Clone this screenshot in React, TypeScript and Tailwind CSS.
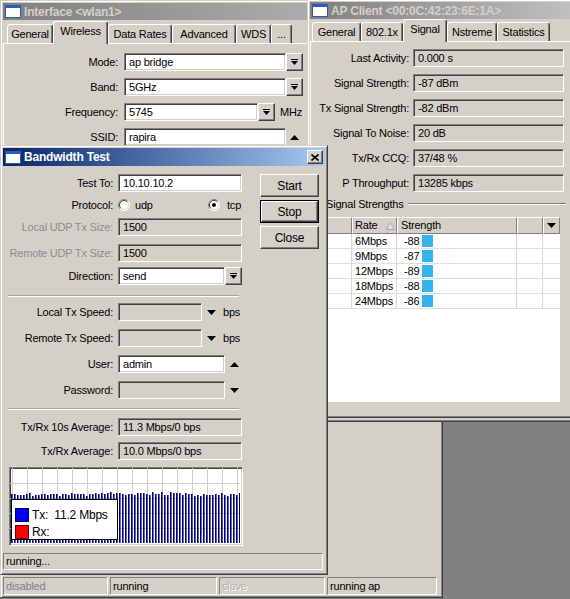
import React from "react";

const FONT = "font-['Liberation_Sans',Arial,sans-serif]";
const RAISED =
  "border border-t-white border-l-white border-r-[#404040] border-b-[#404040] shadow-[inset_-1px_-1px_0_#808080]";
const SUNKEN =
  "border border-t-[#808080] border-l-[#808080] border-r-white border-b-white shadow-[inset_1px_1px_0_#404040,inset_-1px_-1px_0_#d4d0c8]";
const THIN =
  "border border-t-[#808080] border-l-[#808080] border-r-white border-b-white";
const WINDOW =
  "border border-t-[#d4d0c8] border-l-[#d4d0c8] border-r-[#404040] border-b-[#404040] shadow-[inset_1px_1px_0_#ffffff,inset_-1px_-1px_0_#808080]";

function WinIcon() {
  return (
    <svg width="16" height="13" viewBox="0 0 16 13" className="shrink-0">
      <rect x="0.5" y="0.5" width="15" height="12" fill="#ffffff" stroke="#2a5bc0" />
      <rect x="0" y="0" width="16" height="3" fill="#2a5bc0" />
    </svg>
  );
}

function CloseX() {
  return (
    <div className={`${RAISED} bg-[#d4d0c8] w-[16px] h-[14px] flex items-center justify-center shrink-0`}>
      <svg width="8" height="7" viewBox="0 0 8 7">
        <path d="M0.5 0.5 L7.5 6.5 M7.5 0.5 L0.5 6.5" stroke="#000" strokeWidth="1.6" />
      </svg>
    </div>
  );
}

function TitleBar({
  title,
  active,
  close,
  h,
}: {
  title: string;
  active?: boolean;
  close?: boolean;
  h: string;
}) {
  return (
    <div
      className={`${h} shrink-0 flex items-center pl-[2px] pr-[2px] ${
        active
          ? "bg-linear-to-r from-[#0a246a] to-[#a6caf0]"
          : "bg-linear-to-r from-[#808080] to-[#c0c0c0]"
      }`}
    >
      <WinIcon />
      <span
        className={`ml-[3px] font-bold text-[12px] whitespace-nowrap ${
          active ? "text-white" : "text-[#d4d0c8]"
        }`}
      >
        {title}
      </span>
      {close && <div className="ml-auto"><CloseX /></div>}
    </div>
  );
}

function ComboIcon() {
  return (
    <svg width="7" height="7" viewBox="0 0 7 7">
      <rect x="0" y="0" width="7" height="1" fill="#000" />
      <polygon points="0,2 7,2 3.5,6" fill="#000" />
    </svg>
  );
}

function DropBtn({ className = "" }: { className?: string }) {
  return (
    <div className={`${RAISED} bg-[#d4d0c8] w-[17px] h-[18px] flex items-center justify-center shrink-0 ${className}`}>
      <ComboIcon />
    </div>
  );
}

function TriUp() {
  return (
    <svg width="9" height="5" viewBox="0 0 9 5">
      <polygon points="0,5 4.5,0 9,5" fill="#000" />
    </svg>
  );
}
function TriDown() {
  return (
    <svg width="9" height="5" viewBox="0 0 9 5">
      <polygon points="0,0 9,0 4.5,5" fill="#000" />
    </svg>
  );
}

function Field({
  className = "",
  white = true,
  children,
}: {
  className?: string;
  white?: boolean;
  children?: React.ReactNode;
}) {
  return (
    <div
      className={`${SUNKEN} ${white ? "bg-white" : "bg-[#d4d0c8]"} h-[18px] flex items-center pl-[4px] text-black overflow-hidden whitespace-nowrap shrink-0 ${className}`}
    >
      {children}
    </div>
  );
}

function Tab({
  children,
  className,
  active,
}: {
  children: React.ReactNode;
  className: string;
  active?: boolean;
}) {
  return (
    <div
      className={`${className} ${
        active ? "h-[23px] -mb-px relative z-10 bg-[#d4d0c8] pb-[4px]" : "h-[19px]"
      } border-t border-l border-r border-t-white border-l-white border-r-[#404040] shadow-[inset_-1px_0_0_#808080] rounded-t-[3px] flex items-center justify-center whitespace-nowrap shrink-0`}
    >
      {children}
    </div>
  );
}

function Radio({ checked }: { checked?: boolean }) {
  return (
    <svg width="12" height="12" viewBox="0 0 12 12" className="shrink-0">
      <circle cx="6" cy="6" r="5.5" fill="#ffffff" />
      <path d="M2.1 9.9 A5.5 5.5 0 0 1 9.9 2.1" stroke="#808080" fill="none" />
      <path d="M9.9 2.1 A5.5 5.5 0 0 1 2.1 9.9" stroke="#ffffff" fill="none" />
      <path d="M2.8 9.2 A4.5 4.5 0 0 1 9.2 2.8" stroke="#404040" fill="none" />
      <path d="M9.2 2.8 A4.5 4.5 0 0 1 2.8 9.2" stroke="#d4d0c8" fill="none" />
      {checked && <circle cx="6" cy="6" r="2" fill="#000" />}
    </svg>
  );
}

function InterfaceWindow() {
  return (
    <div className={`absolute left-0 top-0 w-[443px] h-[598px] bg-[#d4d0c8] p-[2px] flex flex-col ${WINDOW}`}>
      <TitleBar title="Interface <wlan1>" h="h-[17px]" />
      <div className="flex items-end h-[23px] pl-[4px] shrink-0">
        <Tab className="w-[46px]">General</Tab>
        <Tab className="w-[55px]" active>Wireless</Tab>
        <Tab className="w-[64px]">Data Rates</Tab>
        <Tab className="w-[64px]">Advanced</Tab>
        <Tab className="w-[35px]">WDS</Tab>
        <Tab className="w-[21px]">...</Tab>
      </div>
      <div className="flex-1 border-t border-l border-t-white border-l-white flex flex-col gap-[7px] pt-[9px]">
        <div className="flex items-center">
          <div className="w-[114px] text-right">Mode:</div>
          <Field className="ml-[6px] w-[162px]">ap bridge</Field>
          <DropBtn />
        </div>
        <div className="flex items-center">
          <div className="w-[114px] text-right">Band:</div>
          <Field className="ml-[6px] w-[162px]">5GHz</Field>
          <DropBtn />
        </div>
        <div className="flex items-center">
          <div className="w-[114px] text-right">Frequency:</div>
          <Field className="ml-[6px] w-[134px]">5745</Field>
          <DropBtn />
          <span className="ml-[5px]">MHz</span>
        </div>
        <div className="flex items-center">
          <div className="w-[114px] text-right">SSID:</div>
          <Field className="ml-[6px] w-[162px]">rapira</Field>
          <span className="ml-[4px]"><TriUp /></span>
        </div>
      </div>
      <div className="flex gap-[2px] h-[18px] mt-[1px] shrink-0">
        <div className={`${THIN} w-[105px] pl-[2px] flex items-center text-[#808080]`}>disabled</div>
        <div className={`${THIN} w-[107px] pl-[2px] flex items-center`}>running</div>
        <div className={`${THIN} w-[106px] pl-[2px] flex items-center text-[#b4b0a8] [text-shadow:1px_1px_0_#ffffff]`}>slave</div>
        <div className={`${THIN} w-[110px] pl-[2px] flex items-center`}>running ap</div>
      </div>
    </div>
  );
}

const AP_FIELDS: [string, string][] = [
  ["Last Activity:", "0.000 s"],
  ["Signal Strength:", "-87 dBm"],
  ["Tx Signal Strength:", "-82 dBm"],
  ["Signal To Noise:", "20 dB"],
  ["Tx/Rx CCQ:", "37/48 %"],
  ["P Throughput:", "13285 kbps"],
];

const ROWS: [string, string][] = [
  ["6Mbps", "-88"],
  ["9Mbps", "-87"],
  ["12Mbps", "-89"],
  ["18Mbps", "-88"],
  ["24Mbps", "-86"],
];

const HEAD =
  "h-full border border-t-white border-l-white border-r-[#808080] border-b-[#808080] bg-[#d4d0c8] flex items-center shrink-0";

function APWindow() {
  return (
    <div className={`absolute left-[307px] top-[-1px] w-[268px] h-[423px] bg-[#d4d0c8] p-[2px] flex flex-col ${WINDOW}`}>
      <TitleBar title="AP Client <00:0C:42:23:6E:1A>" h="h-[17px]" />
      <div className="flex items-end h-[22px] pl-[2px] shrink-0">
        <Tab className="w-[49px]">General</Tab>
        <Tab className="w-[42px]">802.1x</Tab>
        <Tab className="w-[44px]" active>Signal</Tab>
        <Tab className="w-[50px]">Nstreme</Tab>
        <Tab className="w-[53px]">Statistics</Tab>
      </div>
      <div className="flex-1 mb-[1px] border border-t-white border-l-white border-r-[#404040] border-b-[#404040] shadow-[inset_-1px_-1px_0_#808080] flex flex-col pt-[7px]">
        <div className="flex flex-col gap-[7px]">
          {AP_FIELDS.map(([l, v]) => (
            <div key={l} className="flex items-center">
              <div className="w-[98px] text-right whitespace-nowrap">{l}</div>
              <Field white={false} className="ml-[4px] w-[151px]">{v}</Field>
            </div>
          ))}
        </div>
        <div className="mt-[5px] h-[14px] flex items-center">
          <span className="pl-[15px] whitespace-nowrap">Signal Strengths</span>
          <div className="flex-1 ml-[4px] mr-[5px] h-[2px] border-t border-b border-t-[#808080] border-b-white" />
        </div>
        <div className="mt-[6px] ml-[4px] w-[245px] h-[185px] bg-white flex flex-col">
          <div className="h-[17px] flex shrink-0">
            <div className={`${HEAD} w-[37px]`} />
            <div className={`${HEAD} w-[45px] pl-[2px]`}>
              <span>Rate</span>
              <svg width="9" height="8" viewBox="0 0 9 8" className="ml-[9px]">
                <polygon points="0.5,7.5 4.5,0.5 8.5,7.5" fill="#e4e2dc" stroke="#a8a8a8" />
              </svg>
            </div>
            <div className={`${HEAD} w-[120px] pl-[3px]`}>Strength</div>
            <div className={`${HEAD} w-[26px]`} />
            <div className={`${HEAD} w-[17px] justify-center`}><TriDown /></div>
          </div>
          {ROWS.map(([r, s]) => (
            <div key={r} className="h-[15px] flex border-b border-b-[#e0ded8] shrink-0">
              <div className="w-[37px] border-r border-r-[#d8d6d0]" />
              <div className="w-[45px] border-r border-r-[#d8d6d0] pl-[3px] flex items-center">{r}</div>
              <div className="w-[120px] border-r border-r-[#d8d6d0] pl-[7px] flex items-center">
                <span>{s}</span>
                <div className="ml-[3px] w-[11px] h-[12px] bg-[#35b3ec]" />
              </div>
              <div className="w-[26px] border-r border-r-[#d8d6d0]" />
              <div className="w-[17px]" />
            </div>
          ))}
        </div>
      </div>
    </div>
  );
}

function rnd(i: number) {
  const x = Math.sin(i * 12.9898 + 4.1) * 43758.5453;
  return x - Math.floor(x);
}

const BARS = Array.from({ length: 77 }, (_, i) => ({
  x: 1 + i * 3,
  top: 25 + Math.round(rnd(i) * 3) - (i > 25 && i < 60 ? 1 : 0),
}));

function Chart() {
  return (
    <div className={`${SUNKEN} ml-[6px] mt-[7px] w-[234px] h-[79px] bg-white relative shrink-0`}>
      <svg width="230" height="75" viewBox="0 0 230 75" className="block">
        {Array.from({ length: 16 }, (_, k) => (
          <line key={"v" + k} x1={2.5 + k * 15} y1="0" x2={2.5 + k * 15} y2="75" stroke="#cfcfcf" />
        ))}
        {[15, 30, 45, 60].map((y) => (
          <line key={"h" + y} x1="0" y1={y + 0.5} x2="230" y2={y + 0.5} stroke="#cfcfcf" />
        ))}
        {BARS.map((b, i) => (
          <rect key={i} x={b.x} y={b.top} width="1.6" height={75 - b.top} fill="#00007a" />
        ))}
      </svg>
      <div className="absolute left-[1px] top-[31px] w-[107px] h-[41px] bg-white border border-black flex flex-col justify-end pl-[3px] gap-[3px]">
        <div className="flex items-center h-[14px]">
          <div className="w-[14px] h-[14px] bg-[#0000ff] border border-[#000060]" />
          <span className="ml-[3px] text-[12px]">Tx:&nbsp;&nbsp;11.2 Mbps</span>
        </div>
        <div className="flex items-center h-[14px]">
          <div className="w-[14px] h-[14px] bg-[#ff0000] border border-[#600000]" />
          <span className="ml-[3px] text-[12px]">Rx:</span>
        </div>
      </div>
    </div>
  );
}

function Btn({ children, def }: { children: React.ReactNode; def?: boolean }) {
  if (def) {
    return (
      <div className="h-[23px] border border-black">
        <div className={`${RAISED} h-full bg-[#d4d0c8] flex items-center justify-center text-[12px]`}>{children}</div>
      </div>
    );
  }
  return (
    <div className={`${RAISED} h-[23px] bg-[#d4d0c8] flex items-center justify-center text-[12px]`}>{children}</div>
  );
}

function Row({
  label,
  mt,
  disabled,
  children,
}: {
  label: string;
  mt: string;
  disabled?: boolean;
  children: React.ReactNode;
}) {
  return (
    <div className={`${mt} h-[18px] flex items-center shrink-0`}>
      <div className={`w-[110px] text-right whitespace-nowrap ${disabled ? "text-[#8c8c8c]" : ""}`}>{label}</div>
      <div className="ml-[5px] flex items-center">{children}</div>
    </div>
  );
}

function Sep({ mt }: { mt: string }) {
  return <div className={`${mt} ml-[5px] w-[231px] h-[2px] border-t border-b border-t-[#a8a49c] border-b-white shrink-0`} />;
}

function BandwidthWindow() {
  return (
    <div className={`absolute left-0 top-[145px] w-[328px] h-[430px] bg-[#d4d0c8] p-[2px] flex flex-col ${WINDOW}`}>
      <TitleBar title="Bandwidth Test" active close h="h-[18px]" />
      <div className="flex">
        <div className="w-[240px] flex flex-col">
          <Row label="Test To:" mt="mt-[8px]">
            <Field className="w-[124px]">10.10.10.2</Field>
          </Row>
          <div className="mt-[6px] h-[14px] flex items-center">
            <div className="w-[110px] text-right">Protocol:</div>
            <div className="ml-[5px] w-[90px] flex items-center">
              <Radio />
              <span className="ml-[5px]">udp</span>
            </div>
            <Radio checked />
            <span className="ml-[7px]">tcp</span>
          </div>
          <Row label="Local UDP Tx Size:" mt="mt-[6px]" disabled>
            <Field white={false} className="w-[124px]">1500</Field>
          </Row>
          <Row label="Remote UDP Tx Size:" mt="mt-[8px]" disabled>
            <Field white={false} className="w-[124px]">1500</Field>
          </Row>
          <Row label="Direction:" mt="mt-[5px]">
            <Field className="w-[107px]">send</Field>
            <DropBtn />
          </Row>
          <Sep mt="mt-[10px]" />
          <Row label="Local Tx Speed:" mt="mt-[6px]">
            <Field white={false} className="w-[84px]" />
            <span className="ml-[5px]"><TriDown /></span>
            <span className="ml-[7px]">bps</span>
          </Row>
          <Row label="Remote Tx Speed:" mt="mt-[8px]">
            <Field white={false} className="w-[84px]" />
            <span className="ml-[5px]"><TriDown /></span>
            <span className="ml-[7px]">bps</span>
          </Row>
          <Row label="User:" mt="mt-[8px]">
            <Field className="w-[107px]">admin</Field>
            <span className="ml-[5px]"><TriUp /></span>
          </Row>
          <Row label="Password:" mt="mt-[8px]">
            <Field white={false} className="w-[107px]" />
            <span className="ml-[5px]"><TriDown /></span>
          </Row>
          <Sep mt="mt-[9px]" />
          <Row label="Tx/Rx 10s Average:" mt="mt-[8px]">
            <Field white={false} className="w-[124px]">11.3 Mbps/0 bps</Field>
          </Row>
          <Row label="Tx/Rx Average:" mt="mt-[6px]">
            <Field white={false} className="w-[124px]">10.0 Mbps/0 bps</Field>
          </Row>
          <Chart />
        </div>
        <div className="ml-[17px] w-[59px] flex flex-col pt-[8px] gap-[3px]">
          <Btn>Start</Btn>
          <Btn def>Stop</Btn>
          <Btn>Close</Btn>
        </div>
      </div>
      <div className={`${THIN} mt-[7px] mr-[2px] h-[17px] flex items-center pl-[2px]`}>running...</div>
    </div>
  );
}

export default function App() {
  return (
    <div className={`relative w-[570px] h-[599px] overflow-hidden bg-[#808080] ${FONT} text-[11px] tracking-[-0.2px] text-black`}>
      <InterfaceWindow />
      <APWindow />
      <BandwidthWindow />
    </div>
  );
}
